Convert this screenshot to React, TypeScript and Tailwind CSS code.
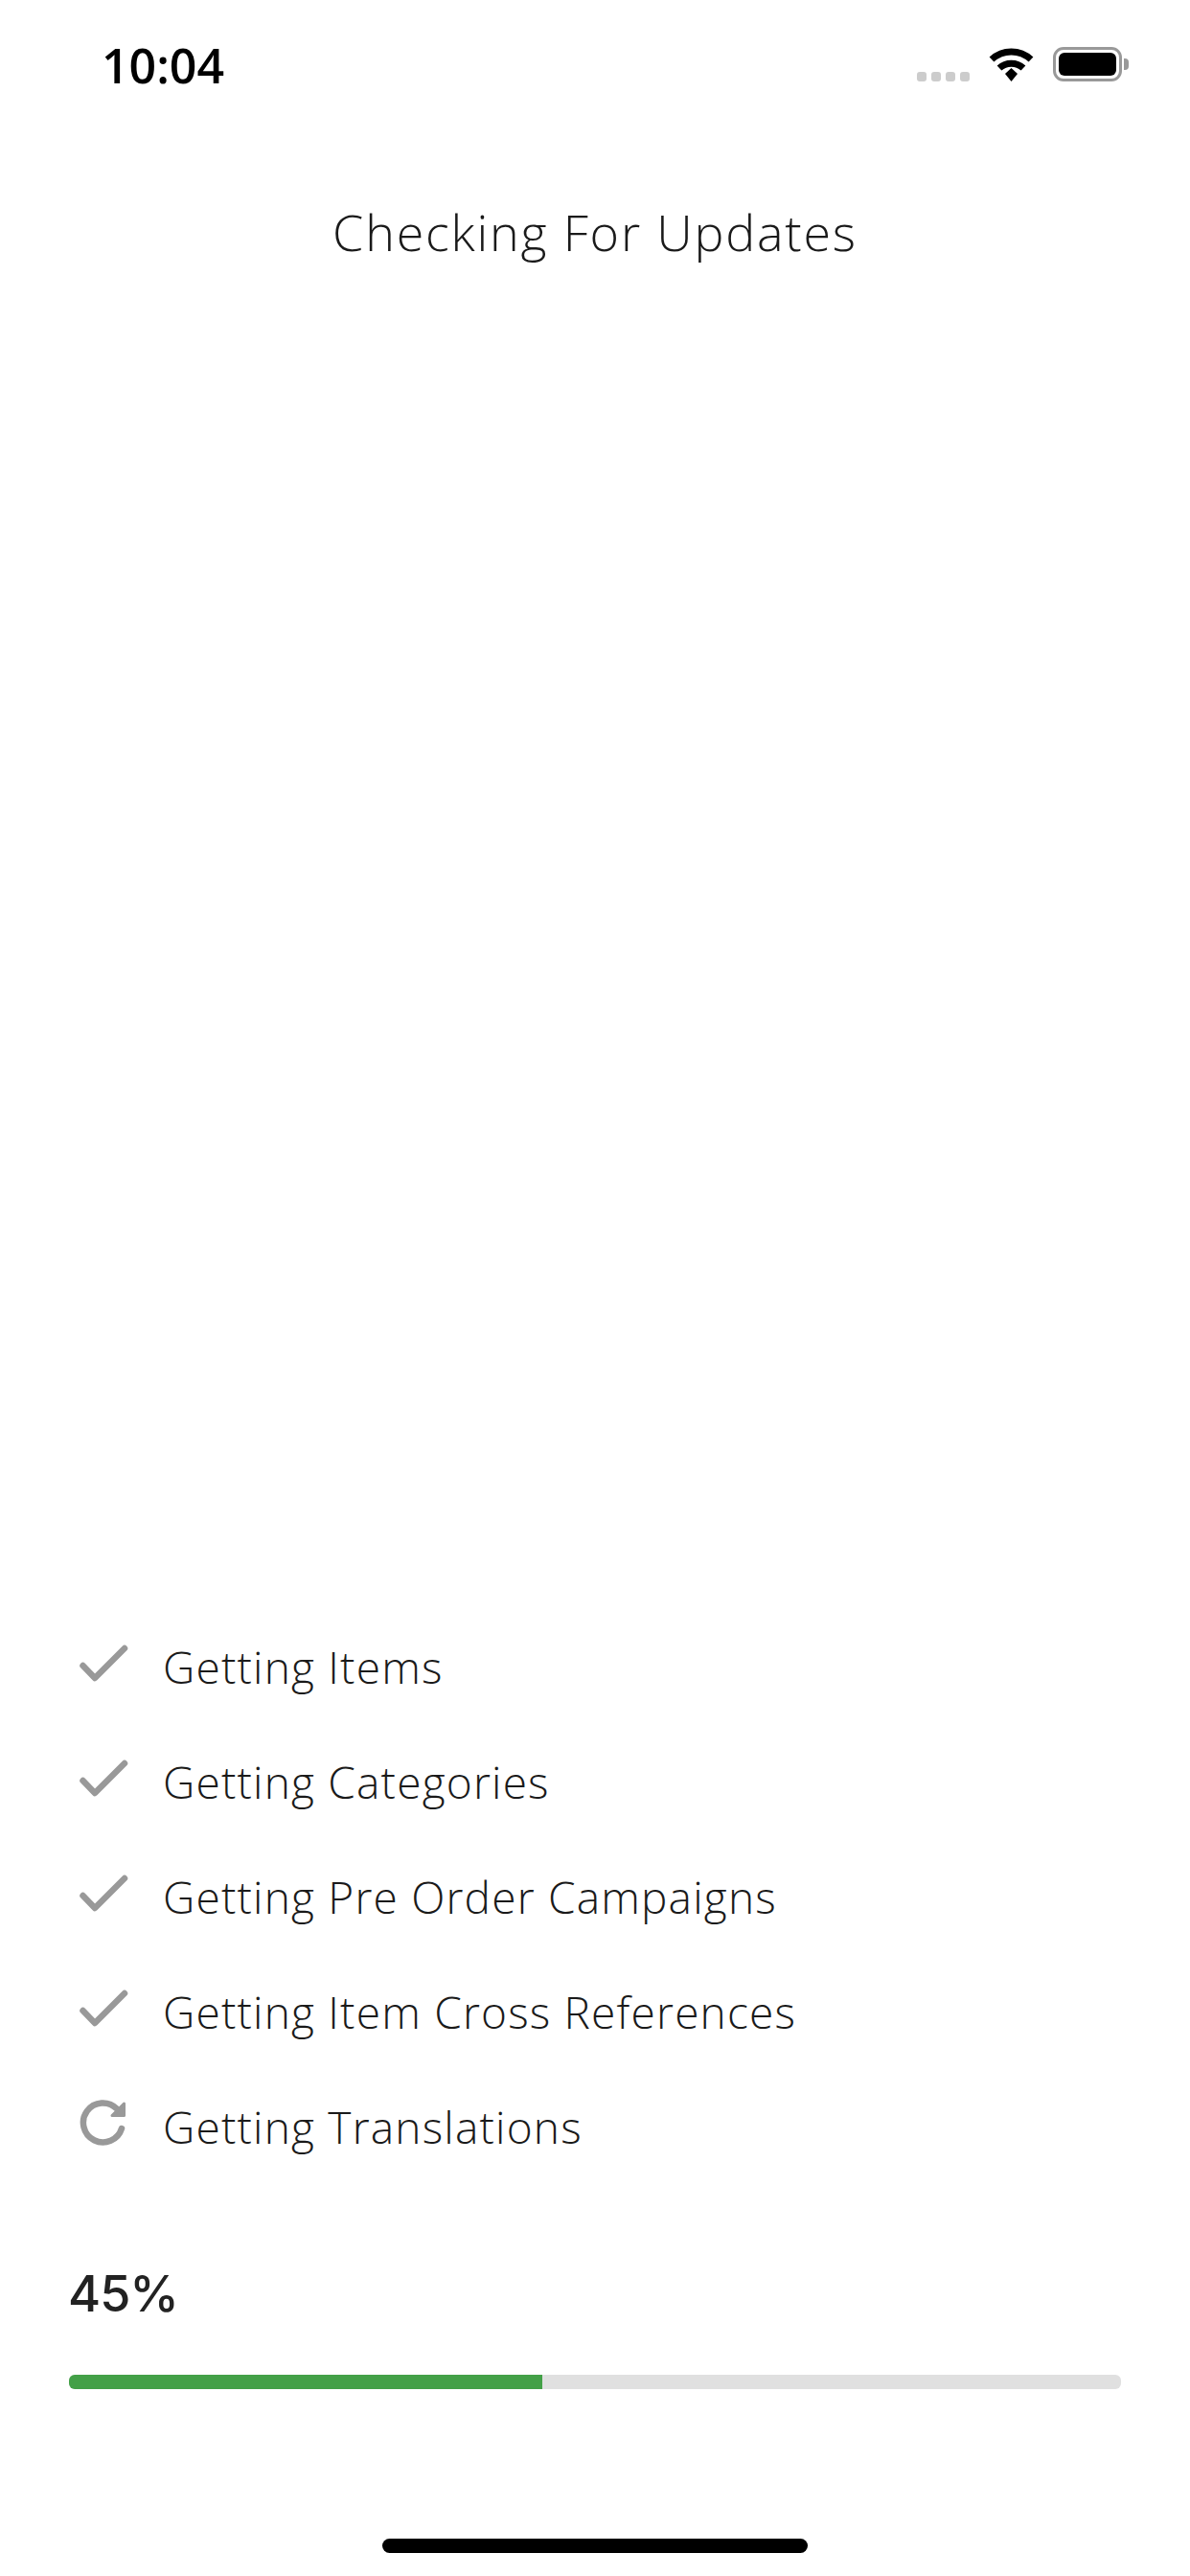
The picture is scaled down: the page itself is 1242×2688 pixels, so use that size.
import React from "react";

const font = "font-['Open_Sans','Liberation_Sans',sans-serif]";

function Check() {
  return (
    <svg width="56" height="44" viewBox="0 0 56 44" fill="none" className="shrink-0">
      <path d="M6.5 23 L19 36 L50 5" stroke="#999999" strokeWidth="6.5" strokeLinecap="round" strokeLinejoin="round" />
    </svg>
  );
}

function Refresh() {
  return (
    <svg width="56" height="52" viewBox="0 0 56 52" fill="none" className="shrink-0">
      <path d="M47 30 A20.5 20.5 0 1 1 42 9.5" stroke="#999999" strokeWidth="6.5" strokeLinecap="round" />
      <path d="M49.5 4 L49.5 16.5 L37 16.5 Z" fill="#999999" stroke="#999999" strokeWidth="3" strokeLinejoin="round" />
    </svg>
  );
}

function Wifi() {
  return (
    <svg width="47" height="36" viewBox="0 0 47 36" fill="none">
      <path d="M3 13 A30 30 0 0 1 44 13" stroke="#000" strokeWidth="7" />
      <path d="M11 22 A18.5 18.5 0 0 1 36 22" stroke="#000" strokeWidth="7" />
      <path d="M17 28 L23.5 22 L30 28 L23.5 36 Z" fill="#000" />
    </svg>
  );
}

function Battery() {
  return (
    <div className="flex items-center">
      <div className="w-[72px] h-[36px] rounded-[11px] border-[3px] border-[#999999] p-[3px]">
        <div className="w-full h-full rounded-[6px] bg-black" />
      </div>
      <div className="w-[5px] h-[12px] ml-[2px] rounded-r-[4px] bg-[#999999]" />
    </div>
  );
}

const rows = [
  "Getting Items",
  "Getting Categories",
  "Getting Pre Order Campaigns",
  "Getting Item Cross References",
];

function Row({ label, icon }: { label: string; icon: React.ReactNode }) {
  return (
    <div className="flex items-center h-[120px]">
      <div className="w-[90px] flex justify-start mb-[5px]">{icon}</div>
      <span className="text-[46px] font-light tracking-[1.2px] text-[#1a1a1a] leading-none">{label}</span>
    </div>
  );
}

export default function App() {
  return (
    <div className={`${font} w-[1242px] h-[2688px] bg-white flex flex-col`}>
      <div className="flex items-start pl-[106px] pr-[64px] pt-[42px] h-[212px]">
        <span className="text-[50px] font-semibold leading-[52px] text-black">10:04</span>
        <div className="ml-auto flex items-end mt-[7px] gap-[20px]">
          <div className="flex gap-[5px]">
            <div className="w-[10px] h-[10px] rounded-[3px] bg-[#cccccc]" />
            <div className="w-[10px] h-[10px] rounded-[3px] bg-[#cccccc]" />
            <div className="w-[10px] h-[10px] rounded-[3px] bg-[#cccccc]" />
            <div className="w-[10px] h-[10px] rounded-[3px] bg-[#cccccc]" />
          </div>
          <Wifi />
          <Battery />
        </div>
      </div>

      <h1 className="text-center text-[52px] font-light tracking-[1.8px] text-[#1a1a1a] leading-[60px]">
        Checking For Updates
      </h1>

      <div className="flex-1" />

      <div className="pl-[80px]">
        {rows.map((r) => (
          <Row key={r} label={r} icon={<Check />} />
        ))}
        <Row label="Getting Translations" icon={<Refresh />} />
      </div>

      <div className="px-[72px] pt-[85px]">
        <div className="text-[52px] font-medium leading-[60px] text-[#222222] font-['Inter',sans-serif] tracking-[-1px] -ml-[1px]">45%</div>
        <div className="mt-[54px] h-[15px] rounded-[6px] bg-[#e0e0e0] overflow-hidden">
          <div className="w-[45%] h-full bg-[#43a047]" />
        </div>
      </div>

      <div className="flex justify-center pt-[156px] pb-[24px]">
        <div className="w-[444px] h-[15px] rounded-full bg-black" />
      </div>
    </div>
  );
}
